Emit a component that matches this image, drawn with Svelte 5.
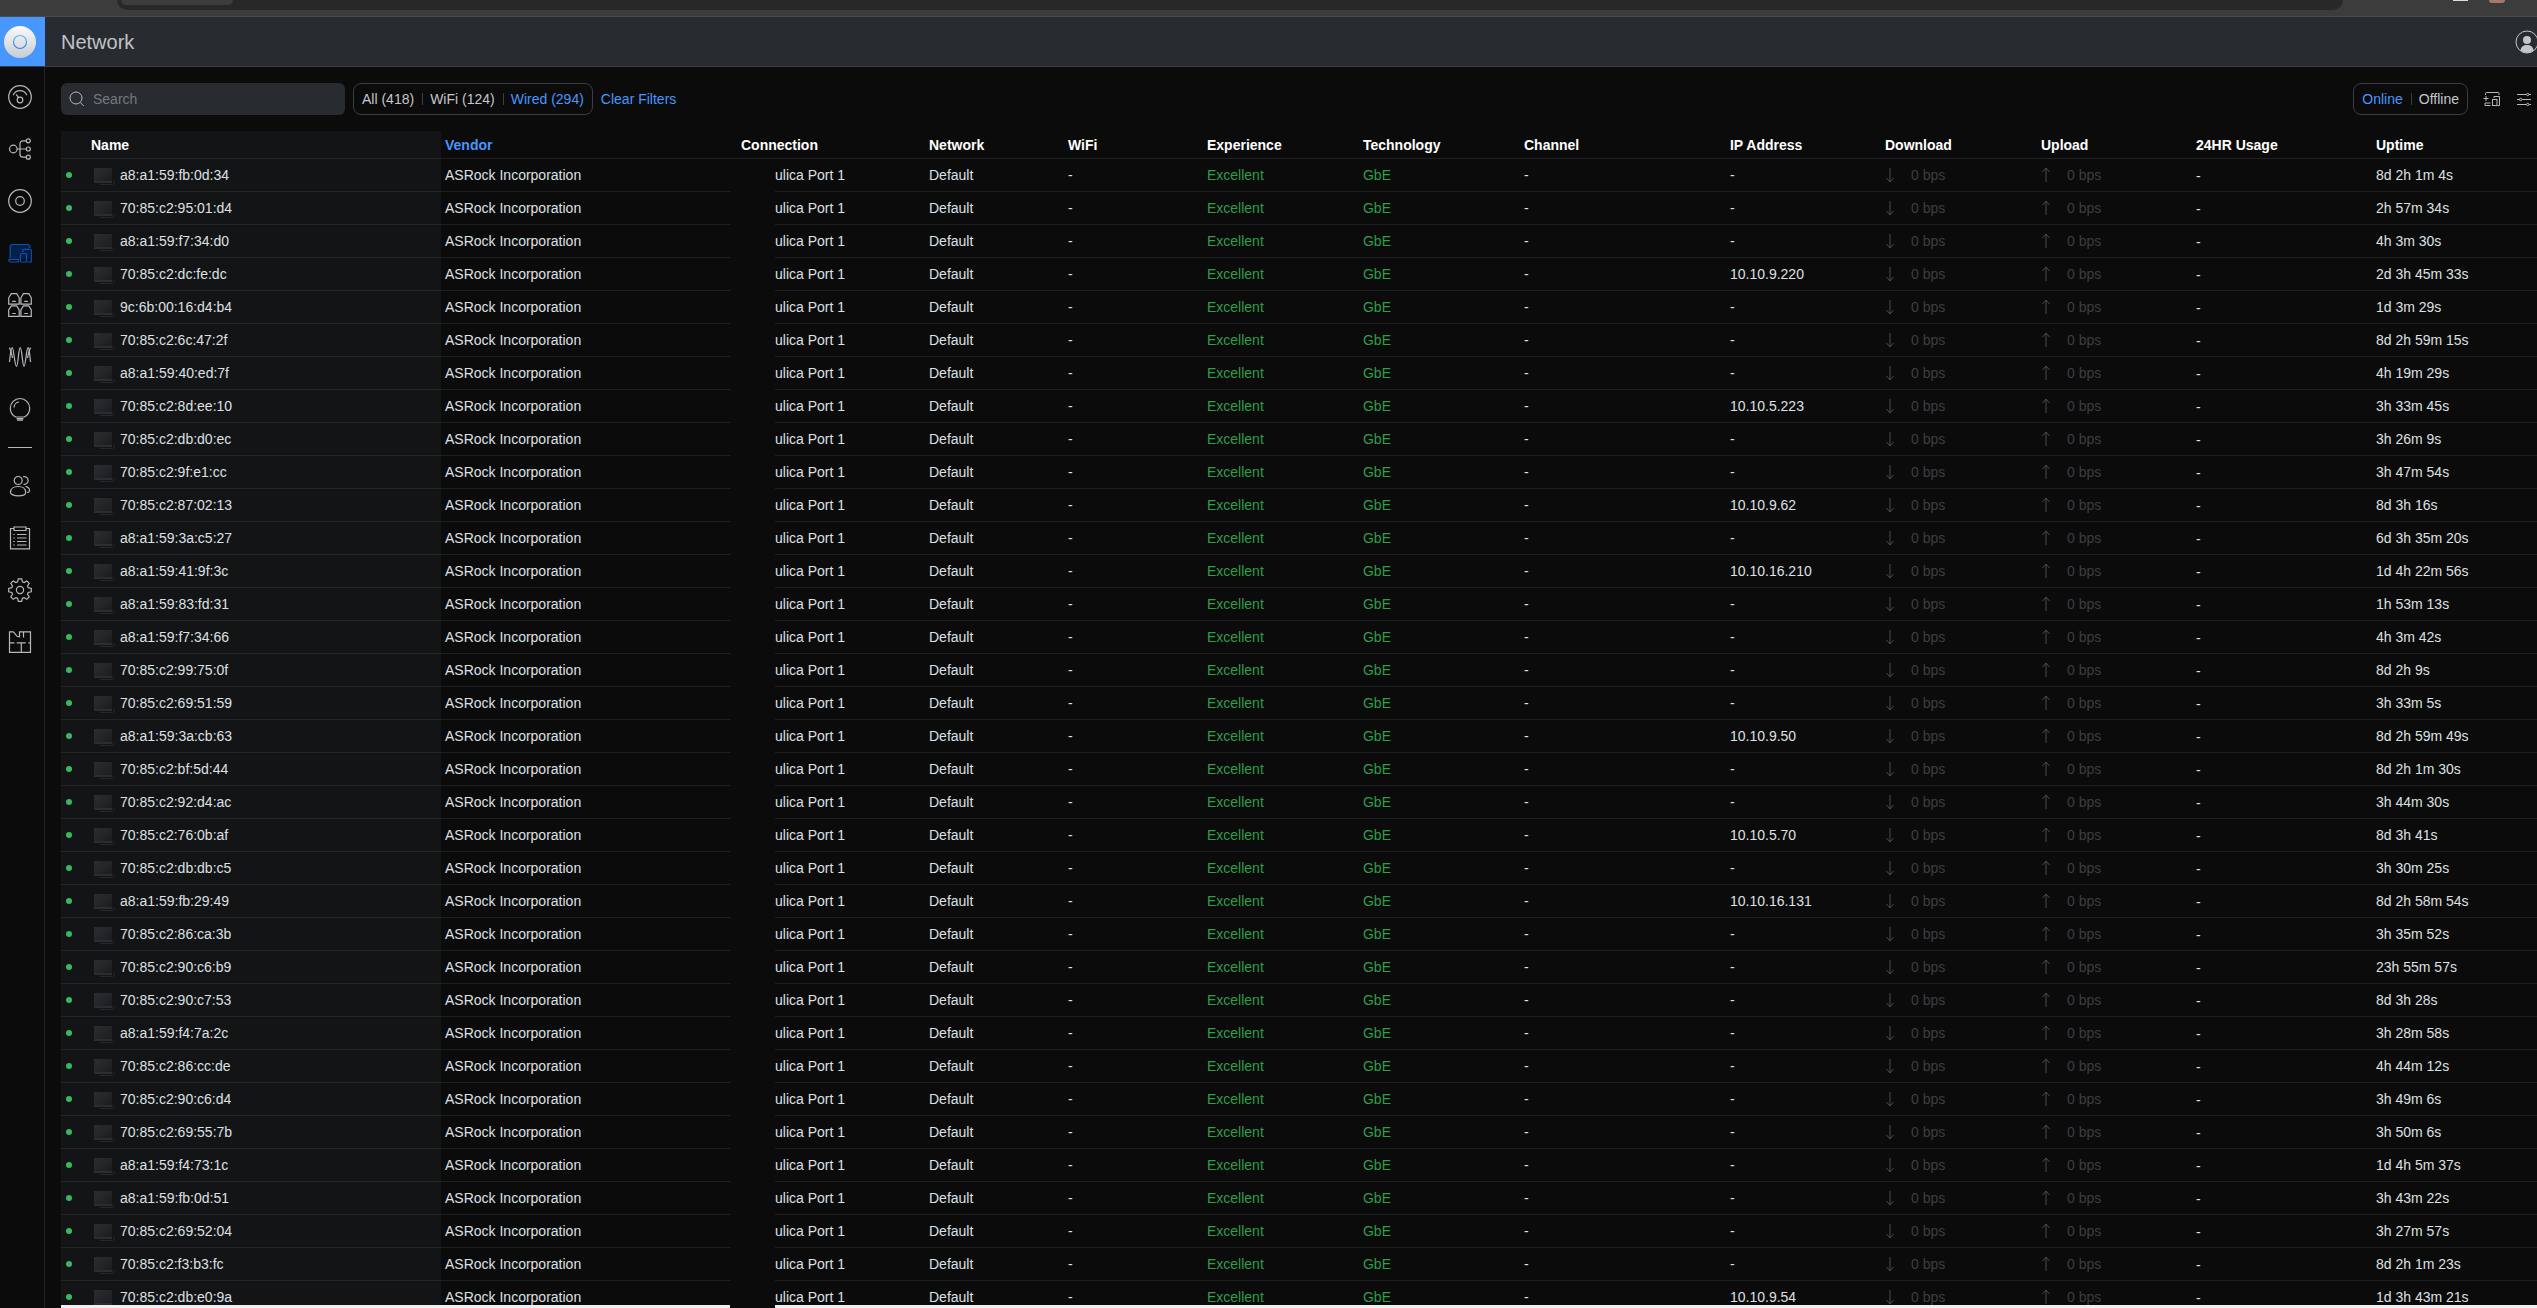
<script lang="ts">
type Column = { label: string; width: number };

const columns: Column[] = [
  { label: "Name", width: 380 },
  { label: "Vendor", width: 296 },
  { label: "Connection", width: 188 },
  { label: "Network", width: 139 },
  { label: "WiFi", width: 139 },
  { label: "Experience", width: 156 },
  { label: "Technology", width: 161 },
  { label: "Channel", width: 206 },
  { label: "IP Address", width: 155 },
  { label: "Download", width: 156 },
  { label: "Upload", width: 155 },
  { label: "24HR Usage", width: 180 },
  { label: "Uptime", width: 165 },
];
const totalWidth = columns.reduce((sum, col) => sum + col.width, 0);

// mac, uptime, ip
const clients: string[][] = [
  ["a8:a1:59:fb:0d:34", "8d 2h 1m 4s"],
  ["70:85:c2:95:01:d4", "2h 57m 34s"],
  ["a8:a1:59:f7:34:d0", "4h 3m 30s"],
  ["70:85:c2:dc:fe:dc", "2d 3h 45m 33s", "10.10.9.220"],
  ["9c:6b:00:16:d4:b4", "1d 3m 29s"],
  ["70:85:c2:6c:47:2f", "8d 2h 59m 15s"],
  ["a8:a1:59:40:ed:7f", "4h 19m 29s"],
  ["70:85:c2:8d:ee:10", "3h 33m 45s", "10.10.5.223"],
  ["70:85:c2:db:d0:ec", "3h 26m 9s"],
  ["70:85:c2:9f:e1:cc", "3h 47m 54s"],
  ["70:85:c2:87:02:13", "8d 3h 16s", "10.10.9.62"],
  ["a8:a1:59:3a:c5:27", "6d 3h 35m 20s"],
  ["a8:a1:59:41:9f:3c", "1d 4h 22m 56s", "10.10.16.210"],
  ["a8:a1:59:83:fd:31", "1h 53m 13s"],
  ["a8:a1:59:f7:34:66", "4h 3m 42s"],
  ["70:85:c2:99:75:0f", "8d 2h 9s"],
  ["70:85:c2:69:51:59", "3h 33m 5s"],
  ["a8:a1:59:3a:cb:63", "8d 2h 59m 49s", "10.10.9.50"],
  ["70:85:c2:bf:5d:44", "8d 2h 1m 30s"],
  ["70:85:c2:92:d4:ac", "3h 44m 30s"],
  ["70:85:c2:76:0b:af", "8d 3h 41s", "10.10.5.70"],
  ["70:85:c2:db:db:c5", "3h 30m 25s"],
  ["a8:a1:59:fb:29:49", "8d 2h 58m 54s", "10.10.16.131"],
  ["70:85:c2:86:ca:3b", "3h 35m 52s"],
  ["70:85:c2:90:c6:b9", "23h 55m 57s"],
  ["70:85:c2:90:c7:53", "8d 3h 28s"],
  ["a8:a1:59:f4:7a:2c", "3h 28m 58s"],
  ["70:85:c2:86:cc:de", "4h 44m 12s"],
  ["70:85:c2:90:c6:d4", "3h 49m 6s"],
  ["70:85:c2:69:55:7b", "3h 50m 6s"],
  ["a8:a1:59:f4:73:1c", "1d 4h 5m 37s"],
  ["a8:a1:59:fb:0d:51", "3h 43m 22s"],
  ["70:85:c2:69:52:04", "3h 27m 57s"],
  ["70:85:c2:f3:b3:fc", "8d 2h 1m 23s"],
  ["70:85:c2:db:e0:9a", "1d 3h 43m 21s", "10.10.9.54"],
];

const filters = ["All (418)", "WiFi (124)", "Wired (294)"];
const states = ["Online", "Offline"];
let filter = $state("Wired (294)");
let status = $state("Online");
let search = $state("");

const rows = $derived(clients.filter((c) => c[0].includes(search.toLowerCase())));
</script>

<div class="screen">
  <div class="browser">
    <div class="address"><span class="chip"></span></div>
    <span class="panel"></span>
    <span class="profile"></span>
  </div>

  <header class="topbar">
    <a class="logo" href="#home" aria-label="Home">
      <svg width="32" height="32" viewBox="0 0 32 32">
        <defs>
          <linearGradient id="disc" x1="0" y1="0" x2="0" y2="1">
            <stop offset="0" stop-color="#fafafb" />
            <stop offset="1" stop-color="#c9ccd3" />
          </linearGradient>
          <linearGradient id="ring" x1="0" y1="0" x2="0" y2="1">
            <stop offset="0" stop-color="#5cc0f5" />
            <stop offset="1" stop-color="#2f7fe6" />
          </linearGradient>
        </defs>
        <circle cx="16" cy="16" r="16" fill="url(#disc)" />
        <circle cx="16" cy="16" r="6.5" fill="none" stroke="url(#ring)" stroke-width="1.2" />
      </svg>
    </a>
    <h1>Network</h1>
    <button class="account" aria-label="Account">
      <svg width="24" height="24" viewBox="0 0 24 24">
        <circle cx="12" cy="12" r="11" fill="none" stroke="#c3c6cb" />
        <circle cx="12" cy="10" r="4" fill="#c3c6cb" />
        <path d="M5.5 20.5c.5-4 3-5.5 6.5-5.5s6 1.5 6.5 5.5a10.5 10.5 0 0 1-13 0z" fill="#c3c6cb" />
      </svg>
    </button>
  </header>

  <div class="body">
    <nav>
      <a href="#dashboard" aria-label="Dashboard">
        <svg viewBox="0 0 24 24">
          <circle cx="12" cy="12" r="11.3" />
          <circle cx="12" cy="15" r="2.8" />
          <path d="M10.6 12.6 8.2 9.3M5.2 10.2a7.4 7.4 0 0 1 13.6 0" />
        </svg>
      </a>
      <a href="#topology" aria-label="Topology">
        <svg viewBox="0 0 24 24">
          <circle cx="5.3" cy="12" r="3.8" />
          <circle cx="20.3" cy="3.8" r="2" />
          <circle cx="20.3" cy="12" r="2" />
          <circle cx="20.3" cy="20.2" r="2" />
          <path d="M9.1 12h9.2M18.3 3.8H15a3 3 0 0 0-3 3v10.4a3 3 0 0 0 3 3h3.3" />
        </svg>
      </a>
      <a href="#devices" aria-label="Devices">
        <svg viewBox="0 0 24 24">
          <circle cx="12" cy="12" r="11.3" />
          <circle cx="12" cy="12" r="4.3" />
        </svg>
      </a>
      <a class="current" href="#clients" aria-label="Clients">
        <svg viewBox="0 0 24 24">
          <path class="fill" d="M2 3.500h19.500V18H2z" />
          <path d="M2.200 17.500v-12a2 2 0 0 1 2-2h15.600a2 2 0 0 1 2 2v1.500M1 18.500h9.500v2.500H2.500A1.500 1.500 0 0 1 1 19.500z" />
          <path d="M14.800 11V9.800a1.500 1.500 0 0 1 1.500-1.500h5.500a1.500 1.500 0 0 1 1.500 1.500V21h-4" />
          <rect x="12.500" y="12.500" width="6" height="8.500" rx="1" />
        </svg>
      </a>
      <a href="#ports" aria-label="Port manager">
        <svg viewBox="0 0 24 24">
          <path d="M.7 11.100V4.800L3.300.7h5.400l2.500 4.100v6.300zM12.900 11.100V4.800L15.400.7h5.400l2.500 4.100v6.300z" />
          <path d="M.7 23.300V17l2.600-4.100h5.400l2.500 4.100v6.300zM12.900 23.300V17l2.500-4.100h5.400l2.500 4.100v6.300z" />
          <path d="M4.200 8.300h3.600M16.300 8.300h3.600M4.200 20.500h3.600M16.300 20.500h3.600" />
        </svg>
      </a>
      <a href="#radios" aria-label="Radio manager">
        <svg viewBox="0 0 24 24">
          <path d="M1.500 17C2.500 8 2.800 2.700 4.200 2.700S6.800 21.300 8.500 21.300 10.500 2.700 12.200 2.700 14.500 21.300 16 21.300 18.500 2.700 20 2.700 21.800 12 22.600 17" />
          <path d="M1.200 2.700C2.800 4 3.500 8 4.500 13M22.800 2.700C21.200 4 20.500 8 19.500 13" />
        </svg>
      </a>
      <a href="#insights" aria-label="Insights">
        <svg viewBox="0 0 24 24">
          <path d="M7.700 20C4.400 18.300 2.300 15 2.300 11.200a9.700 9.700 0 0 1 19.400 0c0 3.800-2.100 7.100-5.400 8.800zM8.500 21.700h7M9 23.200h6" />
          <path d="M6 10.500a5.600 5.600 0 0 1 5-5.500" />
        </svg>
      </a>
      <hr />
      <a href="#admins" aria-label="Admins">
        <svg viewBox="0 0 24 24">
          <circle cx="10.200" cy="6.500" r="4" />
          <path d="M2.500 18.500c0-4 3.500-6 7.700-6s7.500 2 7.500 6c0 2-3.500 3.300-7.500 3.300s-7.700-1.300-7.700-3.300z" />
          <path d="M15 2.800a3.900 3.900 0 1 1 .5 7.500M17.500 12.300c2.500.6 4 2.200 4 4.200 0 1.300-1 1.800-2.300 2.200" />
        </svg>
      </a>
      <a href="#logs" aria-label="System log">
        <svg viewBox="0 0 24 24">
          <path d="M6 2.500H2.500v20.300h19V2.500H18M6 1h12v3.500H6z" />
          <path d="M9 8.500h9.500M9 12h9.500M9 15.500h9.500M9 19h9.500M5.300 8.500h1.400M5.300 12h1.400M5.300 15.500h1.400M5.300 19h1.400" />
        </svg>
      </a>
      <a href="#settings" aria-label="Settings">
        <svg viewBox="0 0 24 24">
          <circle cx="12" cy="12" r="3.6" />
          <path d="M10.300.8h3.400l.7 3.100 1.700.7 2.700-1.700 2.400 2.400-1.700 2.700.7 1.700 3.100.7v3.400l-3.100.7-.7 1.700 1.700 2.700-2.400 2.400-2.700-1.700-1.700.7-.7 3.100h-3.400l-.7-3.100-1.700-.7-2.700 1.700-2.400-2.400 1.700-2.700-.7-1.700-3.100-.7v-3.400l3.100-.7.7-1.700-1.700-2.700 2.400-2.400 2.700 1.700 1.700-.7z" />
        </svg>
      </a>
      <a href="#floorplan" aria-label="Floor plan">
        <svg viewBox="0 0 24 24">
          <path d="M5.500 1.800h-4v20.500h21V1.800H11.500v5L9 6.300 5.500 1.800M15.500 1.800v5.700M1.500 12.800h5M8.700 12.800h9M13.300 12.800v9.500M20.300 12.800h2.200" />
        </svg>
      </a>
    </nav>

    <main>
      <div class="toolbar">
        <label class="search">
          <svg width="16" height="16" viewBox="0 0 16 16">
            <circle cx="7" cy="7" r="6" />
            <path d="m11.300 11.500 3.500 3.500" />
          </svg>
          <input type="text" placeholder="Search" aria-label="Search" bind:value={search} />
        </label>
        <div class="group">
          {#each filters as name}
            <button class:active={filter === name} onclick={() => (filter = name)}>{name}</button>
          {/each}
        </div>
        <button class="clear" onclick={() => (filter = "All (418)")}>Clear Filters</button>
        <div class="group right">
          {#each states as name}
            <button class:active={status === name} onclick={() => (status = name)}>{name}</button>
          {/each}
        </div>
        <button class="tool" aria-label="Add client">
          <svg width="18" height="16" viewBox="0 0 18 16">
            <path d="M2.500 4V2.500a1 1 0 0 1 1-1h11.500a1 1 0 0 1 1 1V4M.500 7.500h5M3 5v5M2 12h5.500M2 14.500h5.500M2 12v2.500M11 7V5.500h5.500v9H14.500" />
            <rect x="9.500" y="8.500" width="4.500" height="6" />
          </svg>
        </button>
        <button class="tool" aria-label="Columns">
          <svg width="16" height="16" viewBox="0 0 16 16">
            <path d="M1 3.500h9.500M13 3.500h2M1 8.500h2.500M6 8.500h9M1 13.500h9.500M13 13.500h2" />
            <circle cx="11.700" cy="3.500" r="1.200" />
            <circle cx="4.700" cy="8.500" r="1.200" />
            <circle cx="11.700" cy="13.500" r="1.200" />
          </svg>
        </button>
      </div>

      <div class="list">
        <div class="scroll">
          <table>
            <colgroup>
              {#each columns as col}
                <col style="width: {(col.width / totalWidth) * 100}%" />
              {/each}
            </colgroup>
            <thead>
              <tr>
                {#each columns as col}
                  <th class:sorted={col.label === "Vendor"}>{col.label}</th>
                {/each}
              </tr>
            </thead>
            <tbody>
              {#each rows as [mac, uptime, ip]}
                <tr>
                  <td>
                    <div class="name">
                      <span class="dot"></span>
                      <svg width="22" height="20" viewBox="0 0 22 20">
                        <defs>
                          <linearGradient id="monitor" x1="0" y1="0" x2="1" y2="1">
                            <stop offset="0" stop-color="#2b2d30" />
                            <stop offset="0.5" stop-color="#232528" />
                            <stop offset="1" stop-color="#191b1d" />
                          </linearGradient>
                        </defs>
                        <path d="M0 3h18v15H0z" fill="url(#monitor)" />
                        <path d="M0 16h18v2H0z" fill="#2b2d30" />
                        <path d="M6 19.500h12.500a1.500 1.500 0 0 0 1.500-1.500v-2" fill="none" stroke="#25282c" />
                      </svg>
                      {mac}
                    </div>
                  </td>
                  <td>ASRock Incorporation</td>
                  <td class="port">ulica Port 1</td>
                  <td>Default</td>
                  <td>-</td>
                  <td class="good">Excellent</td>
                  <td class="good">GbE</td>
                  <td>-</td>
                  <td>{ip ?? "-"}</td>
                  <td>
                    <div class="rate">
                      <svg width="10" height="16" viewBox="0 0 10 16"><path d="M5 1v14M1.500 11 5 15l3.500-4" /></svg>
                      0 bps
                    </div>
                  </td>
                  <td>
                    <div class="rate">
                      <svg width="10" height="16" viewBox="0 0 10 16"><path d="M5 15V1M1.500 5 5 1l3.500 4" /></svg>
                      0 bps
                    </div>
                  </td>
                  <td class="usage">-</td>
                  <td>{uptime}</td>
                </tr>
              {/each}
            </tbody>
          </table>
        </div>
        <div class="edge"></div>
        <div class="mask"></div>
      </div>
    </main>
  </div>
</div>

<style>
:global(body) {
  background: #0b0b0b;
}
.screen {
  height: 100vh;
  display: flex;
  flex-direction: column;
  overflow: hidden;
  background: #0b0b0b;
  color: #dee0e3;
  font: 14px/20px "Liberation Sans", Arial, sans-serif;
}
button {
  border: 0;
  padding: 0;
  background: none;
  color: inherit;
  font: inherit;
}
svg {
  display: block;
  flex: none;
}

.browser {
  flex: none;
  display: flex;
  align-items: flex-start;
  height: 16px;
  padding: 0 32px 0 117px;
  background: #3c3c3c;
  border-bottom: 1px solid #4a4b4d;
  overflow: hidden;
}
.address {
  flex: 1;
  height: 10px;
  margin-right: 110px;
  padding-left: 4px;
  border-radius: 0 0 12px 12px;
  background: #282828;
}
.chip {
  display: block;
  width: 112px;
  height: 5px;
  border-radius: 0 0 8px 8px;
  background: #3c3c3c;
}
.panel {
  width: 15px;
  height: 1px;
  margin-right: 21px;
  background: #dcdcdc;
}
.profile {
  width: 16px;
  height: 3px;
  border-radius: 0 0 8px 8px;
  background: #a5786c;
}

.topbar {
  flex: none;
  display: flex;
  align-items: center;
  height: 49px;
  background: #282b2f;
  border-bottom: 1px solid #3a3d41;
  overflow: hidden;
}
.logo {
  box-sizing: border-box;
  width: 45px;
  height: 50px;
  padding: 9px 4px;
  margin-bottom: -1px;
  background: #4797ff;
}
h1 {
  flex: 1;
  margin: 0 0 0 16px;
  font-size: 20px;
  font-weight: 400;
  color: #c0c3c8;
}
.account {
  margin-right: -2px;
}

.body {
  flex: 1;
  min-height: 0;
  display: flex;
}
nav {
  flex: none;
  width: 40px;
  padding: 4px 4px 0 0;
  border-right: 1px solid #232426;
}
nav a {
  display: flex;
  align-items: center;
  justify-content: center;
  height: 52px;
}
nav svg {
  width: 24px;
  height: 24px;
  fill: none;
  stroke: #b6b9bd;
  stroke-width: 1.2;
}
nav .current svg {
  stroke: #0a53b4;
}
nav .current .fill {
  fill: #04204a;
  stroke: none;
}
hr {
  width: 24px;
  height: 1px;
  margin: 12px auto;
  border: 0;
  background: #b6b9bd;
}

main {
  flex: 1;
  min-width: 0;
  display: flex;
  flex-direction: column;
  padding: 16px 0 0 16px;
}
.toolbar {
  flex: none;
  display: flex;
  align-items: center;
  gap: 8px;
  height: 32px;
  margin-bottom: 16px;
  padding-right: 5px;
}
.search {
  box-sizing: border-box;
  display: flex;
  align-items: center;
  gap: 8px;
  width: 284px;
  height: 32px;
  padding: 0 8px;
  border-radius: 6px;
  background: #282b2f;
}
.search svg,
.tool svg {
  fill: none;
  stroke: #b6b9bd;
}
.search input {
  flex: 1;
  min-width: 0;
  padding: 0;
  border: 0;
  outline: 0;
  background: none;
  color: #dee0e3;
  font: inherit;
}
.search input::placeholder {
  color: #757a80;
  opacity: 1;
}
.group {
  box-sizing: border-box;
  display: flex;
  align-items: center;
  height: 32px;
  border: 1px solid #3a3d41;
  border-radius: 8px;
  color: #c3c6cb;
}
.group button {
  height: 12px;
  padding: 0 8px;
  line-height: 12px;
}
.group button + button {
  padding-left: 7px;
  border-left: 1px solid #3a3d41;
}
.group .active,
.clear {
  color: #4797ff;
}
.right {
  margin-left: auto;
}
.tool {
  padding-left: 7px;
}

.list {
  position: relative;
  flex: 1;
  min-height: 0;
  display: flex;
  flex-direction: column;
}
.scroll {
  flex: 1;
  min-height: 0;
  overflow: hidden;
}
.edge {
  flex: none;
  height: 3px;
  background: #f0f0f0;
}
/* hides the switch name in front of the port */
.mask {
  position: absolute;
  top: 28px;
  bottom: 0;
  left: 27%;
  width: 45px;
  background: #0b0b0b;
}
table {
  width: 100%;
  table-layout: fixed;
  border-collapse: separate;
  border-spacing: 0;
}
th,
td {
  box-sizing: border-box;
  padding: 0 4px;
  border-bottom: 1px solid #1f2022;
  text-align: left;
  white-space: nowrap;
}
th {
  height: 28px;
  color: #fff;
  font-weight: 700;
}
td {
  height: 33px;
}
th:first-child,
td:first-child {
  background: #131416;
  border-color: #232527;
}
th:first-child {
  padding-left: 30px;
}
th.sorted {
  color: #4797ff;
}
.name {
  display: flex;
  align-items: center;
}
.dot {
  width: 6px;
  height: 6px;
  margin: 0 22px 0 1px;
  border-radius: 50%;
  background: #38b95e;
}
.name svg {
  margin-right: 4px;
}
td.port {
  padding-left: 38px;
}
.good {
  color: #2f9e49;
}
.rate {
  display: flex;
  align-items: center;
  gap: 16px;
  color: #3c3e41;
}
.rate svg {
  fill: none;
  stroke: #4a4c50;
}
td.usage {
  padding-top: 2px;
}
</style>
